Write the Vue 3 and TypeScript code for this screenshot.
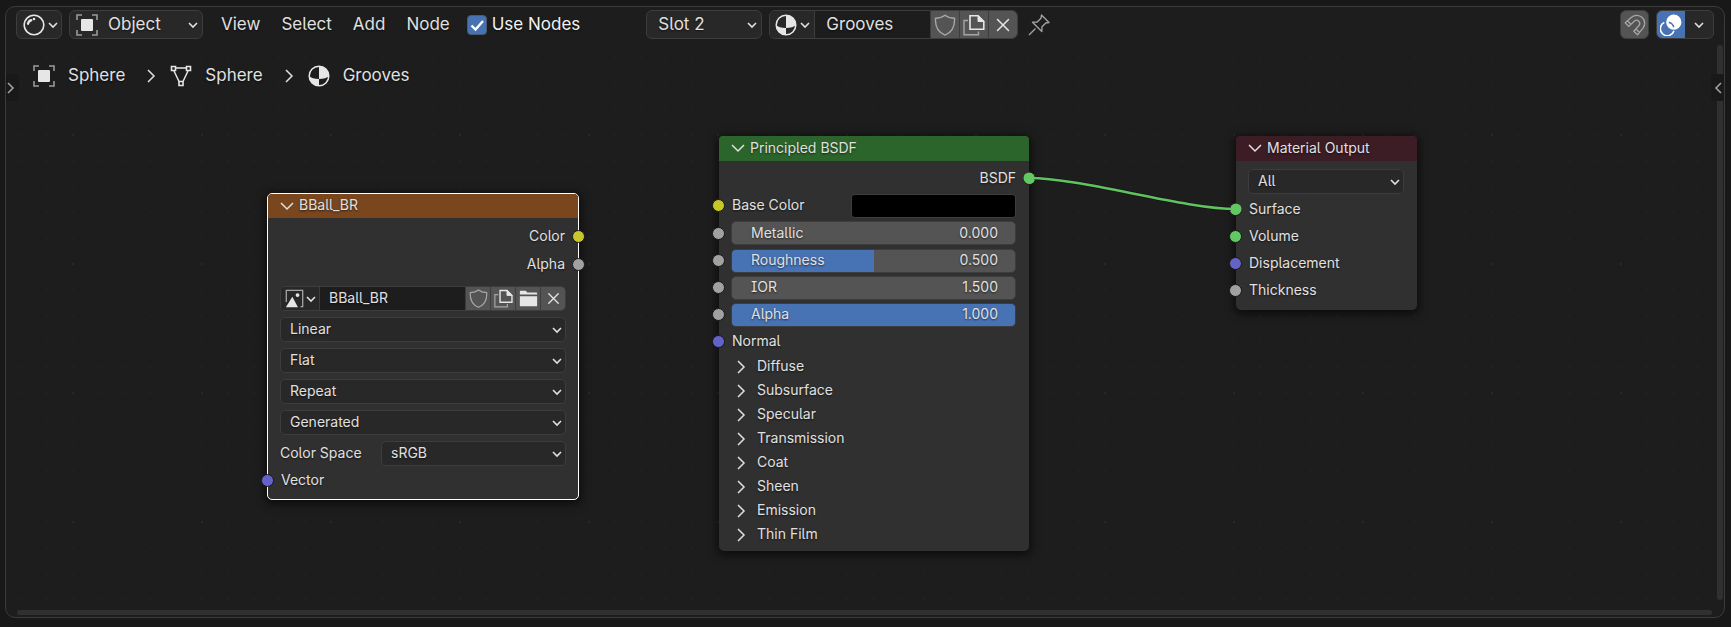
<script setup lang="ts">
import { computed, ref } from 'vue'

interface Slider {
  label: string
  value: number
  fill: number
  tall: boolean
}

const useNodes = ref(true)
const materialName = ref('Grooves')
const imageName = ref('BBall_BR')
const baseColor = ref('#000000')

const menus = ['View', 'Select', 'Add', 'Node']

const crumbs = [
  { icon: 'object', label: 'Sphere' },
  { icon: 'mesh', label: 'Sphere' },
  { icon: 'material', label: 'Grooves' },
]

const imageOptions = [
  { label: 'Interpolation', value: 'Linear' },
  { label: 'Projection', value: 'Flat' },
  { label: 'Extension', value: 'Repeat' },
  { label: 'Source', value: 'Generated' },
]

const sliders = ref<Slider[]>([
  { label: 'Metallic', value: 0, fill: 0, tall: true },
  { label: 'Roughness', value: 0.5, fill: 0.5, tall: false },
  { label: 'IOR', value: 1.5, fill: 0, tall: false },
  { label: 'Alpha', value: 1, fill: 1, tall: false },
])

const panels = ['Diffuse', 'Subsurface', 'Specular', 'Transmission', 'Coat', 'Sheen', 'Emission', 'Thin Film']

const outputSockets = [
  { label: 'Surface', color: 'green' },
  { label: 'Volume', color: 'green' },
  { label: 'Displacement', color: 'blue' },
  { label: 'Thickness', color: 'gray' },
]

const link = { x1: 1023, y1: 171, x2: 1230, y2: 202 }
const linkPath = computed(() => {
  const reach = (link.x2 - link.x1) * 0.25
  return `M${link.x1} ${link.y1}C${link.x1 + reach} ${link.y1} ${link.x2 - reach} ${link.y2} ${link.x2} ${link.y2}`
})
</script>

<template>
  <div class="window">
    <svg class="defs" aria-hidden="true">
      <symbol id="object" viewBox="0 0 22 22">
        <path d="M1 6V1H6M16 1H21V6M21 16V21H16M6 21H1V16" fill="none" stroke="#9a9a9a" stroke-width="1.6" />
        <rect x="5" y="5" width="12" height="12" rx="1" fill="#e6e6e6" />
      </symbol>
      <symbol id="mesh" viewBox="0 0 22 22">
        <path d="M6 3H16M4 6L9 16.500M18 6L13 16.500" fill="none" stroke="#e6e6e6" stroke-width="1.500" />
        <path d="M1.500 1.500H5.500V5.500H1.500ZM16.500 1.500H20.500V5.500H16.500ZM9 16.500H13V20.500H9Z" fill="#1d1d1d" stroke="#e6e6e6" stroke-width="1.600" />
      </symbol>
      <symbol id="material" viewBox="0 0 22 22">
        <circle cx="11" cy="11" r="9.800" fill="none" stroke="#e6e6e6" stroke-width="1.500" />
        <path d="M11 1A10 10 0 0 1 21 11Q18 14 11 14Z" fill="#e6e6e6" />
        <path d="M11 14V21A10 10 0 0 1 1 11Q4 14 11 14Z" fill="#e6e6e6" />
      </symbol>
      <symbol id="editor" viewBox="0 0 22 22">
        <circle cx="11" cy="11" r="9.800" fill="none" stroke="#e6e6e6" stroke-width="1.600" />
        <path d="M5 9.700Q5.800 6.600 8.200 6.200" fill="none" stroke="#e6e6e6" stroke-width="2.400" stroke-linecap="round" />
        <circle cx="11" cy="5" r="1.300" fill="#e6e6e6" />
      </symbol>
      <symbol id="shield" viewBox="0 0 22 22">
        <path d="M11 1.200Q14.500 4 20.500 4.200C21 12 18.500 18 11 21.200C3.500 18 1 12 1.500 4.200Q7.500 4 11 1.200Z" fill="none" stroke="#a6a6a6" stroke-width="1.400" />
      </symbol>
      <symbol id="copy" viewBox="0 0 22 22">
        <path d="M5 6.500H1V20.800H15.500V17.500" fill="none" stroke="#a6a6a6" stroke-width="1.400" />
        <path d="M7 1.700H15L20.800 7.500V15.300H7Z" fill="none" stroke="#e6e6e6" stroke-width="1.600" />
        <path d="M15 1.500V7.500H21Z" fill="#e6e6e6" stroke="#e6e6e6" />
      </symbol>
      <symbol id="close" viewBox="0 0 22 22">
        <path d="M5.500 5.500L16.500 16.500M16.500 5.500L5.500 16.500" fill="none" stroke="#e6e6e6" stroke-width="1.500" stroke-linecap="round" />
      </symbol>
      <symbol id="folder" viewBox="0 0 22 22">
        <path d="M1 6.500V3Q1 2 2 2H8L9.500 4H20Q21 4 21 5V6.500Z" fill="#e6e6e6" />
        <path d="M1 8.500H21V19Q21 20 20 20H2Q1 20 1 19Z" fill="#e6e6e6" />
      </symbol>
      <symbol id="image" viewBox="0 0 22 22">
        <path d="M1.500 15V1.500H20.500V20.500H18" fill="none" stroke="#a6a6a6" stroke-width="1.500" />
        <path d="M1 21L8.500 9L15 21Z" fill="#e6e6e6" />
        <circle cx="14.500" cy="7" r="2.200" fill="#e6e6e6" />
      </symbol>
      <symbol id="pin" viewBox="0 0 22 22">
        <path d="M1 21L7.500 14.500M13.500 1L21 8.500L17.800 9L14 12.800L13.800 17.500L4.500 8.200L9.200 8L13 4.200Z" fill="none" stroke="#a0a0a0" stroke-width="1.400" stroke-linejoin="round" />
      </symbol>
      <symbol id="magnet" viewBox="0 0 22 22">
        <path d="M1.200 8.800L7.500 3.200A8 8 0 0 1 19 14.200L13.500 20.800L9.800 17.200L15 11.500A3.200 3.200 0 0 0 10.500 7L4.800 12.400ZM3.500 6.800L7 10.500M11.800 15L15.500 18.500" fill="none" stroke="#a6a6a6" stroke-width="1.300" stroke-linejoin="round" />
      </symbol>
      <symbol id="overlay" viewBox="0 0 22 22">
        <circle cx="13.800" cy="8.200" r="7.600" fill="#fff" />
        <path d="M4.300 8.400A7 7 0 1 0 14 16.800" fill="none" stroke="#fff" stroke-width="1.600" />
        <path d="M8.800 8.200A7 7 0 0 1 13.800 13.200" fill="none" stroke="#4772b3" stroke-width="1.400" />
      </symbol>
      <symbol id="down" viewBox="0 0 10 10">
        <path d="M1 3L5 7L9 3" fill="none" stroke="#e0e0e0" stroke-width="1.600" />
      </symbol>
      <symbol id="fold" viewBox="0 0 14 14">
        <path d="M1 4L7 10L13 4" fill="none" stroke="#e0e0e0" stroke-width="1.500" />
      </symbol>
      <symbol id="right" viewBox="0 0 14 14">
        <path d="M4 1L10 7L4 13" fill="none" stroke="#e0e0e0" stroke-width="1.500" />
      </symbol>
    </svg>

    <main class="editor">
      <div class="canvas">
        <svg class="backdrop" aria-hidden="true">
          <defs>
            <pattern id="dots" x="66" y="127" width="129" height="129" patternUnits="userSpaceOnUse">
              <template v-for="y in [0, 26, 52, 77, 103]" :key="y">
                <rect v-for="x in [0, 26, 52, 77, 103]" :key="x" :x="x" :y="y" width="2" height="2" :fill="x + y === 0 ? '#282828' : '#212121'" />
              </template>
            </pattern>
          </defs>
          <rect width="100%" height="100%" fill="url(#dots)" />
        </svg>

        <section class="node texture">
          <header class="title orange">
            <svg class="fold"><use href="#fold" /></svg>
            <span>BBall_BR</span>
          </header>
          <div class="outputs">
            <div class="socket-row out tall"><span>Color</span><i class="socket right yellow"></i></div>
            <div class="socket-row out tall"><span>Alpha</span><i class="socket right gray"></i></div>
          </div>
          <div class="id-block compact">
            <button class="cell browse" aria-label="Browse images">
              <svg class="icon"><use href="#image" /></svg>
              <svg class="arrow"><use href="#down" /></svg>
            </button>
            <input v-model="imageName" class="name" aria-label="Image name" spellcheck="false" />
            <button class="cell" aria-label="Fake user"><svg class="icon"><use href="#shield" /></svg></button>
            <button class="cell" aria-label="New image"><svg class="icon"><use href="#copy" /></svg></button>
            <button class="cell" aria-label="Open image"><svg class="icon"><use href="#folder" /></svg></button>
            <button class="cell" aria-label="Unlink"><svg class="icon"><use href="#close" /></svg></button>
          </div>
          <div v-for="option in imageOptions" :key="option.label" class="select">
            <select :aria-label="option.label"><option>{{ option.value }}</option></select>
            <svg class="arrow"><use href="#down" /></svg>
          </div>
          <div class="space-row">
            <label for="space">Color Space</label>
            <div class="select">
              <select id="space"><option>sRGB</option></select>
              <svg class="arrow"><use href="#down" /></svg>
            </div>
          </div>
          <div class="socket-row tall"><i class="socket blue"></i><span>Vector</span></div>
        </section>

        <section class="node shader">
          <header class="title green">
            <svg class="fold"><use href="#fold" /></svg>
            <span>Principled BSDF</span>
          </header>
          <div class="outputs">
            <div class="socket-row out"><span>BSDF</span><i class="socket right green"></i></div>
          </div>
          <div class="socket-row">
            <i class="socket yellow"></i>
            <label for="base">Base Color</label>
            <input id="base" v-model="baseColor" type="color" class="swatch" />
          </div>
          <div v-for="slider in sliders" :key="slider.label" class="slider-row" :class="{ tall: slider.tall }">
            <i class="socket gray"></i>
            <div class="slider">
              <div class="fill" :style="{ width: slider.fill * 100 + '%' }"></div>
              <input :id="slider.label" v-model.number="slider.value" type="range" min="0" max="2" step="0.001" />
              <label :for="slider.label">{{ slider.label }}</label>
              <output :for="slider.label">{{ slider.value.toFixed(3) }}</output>
            </div>
          </div>
          <div class="socket-row"><i class="socket blue"></i><span>Normal</span></div>
          <button v-for="panel in panels" :key="panel" class="panel">
            <svg class="fold"><use href="#right" /></svg><span>{{ panel }}</span>
          </button>
        </section>

        <section class="node output">
          <header class="title red">
            <svg class="fold"><use href="#fold" /></svg>
            <span>Material Output</span>
          </header>
          <div class="select">
            <select aria-label="Target"><option>All</option></select>
            <svg class="arrow"><use href="#down" /></svg>
          </div>
          <div v-for="socket in outputSockets" :key="socket.label" class="socket-row">
            <i class="socket" :class="socket.color"></i><span>{{ socket.label }}</span>
          </div>
        </section>

        <svg class="links" aria-hidden="true">
          <path :d="linkPath" fill="none" stroke="#151515" stroke-width="4" />
          <path :d="linkPath" fill="none" stroke="#5fc45f" stroke-width="2.500" />
          <circle :cx="link.x1" :cy="link.y1" r="5.500" fill="#63c763" />
          <circle :cx="link.x2" :cy="link.y2" r="5.500" fill="#63c763" />
        </svg>
      </div>

      <header class="toolbar">
        <button class="box type" aria-label="Editor type">
          <svg class="icon"><use href="#editor" /></svg>
          <svg class="arrow"><use href="#down" /></svg>
        </button>
        <div class="select mode">
          <svg class="icon"><use href="#object" /></svg>
          <select aria-label="Shader type"><option>Object</option></select>
          <svg class="arrow"><use href="#down" /></svg>
        </div>
        <nav class="menus">
          <button v-for="menu in menus" :key="menu">{{ menu }}</button>
        </nav>
        <label class="check">
          <input v-model="useNodes" type="checkbox" />
          <svg v-if="useNodes" class="tick" viewBox="0 0 20 20"><path d="M4.500 10.500L8.500 14.500L16 6" fill="none" stroke="#fff" stroke-width="2.400" /></svg>
          <span>Use Nodes</span>
        </label>
        <div class="select slot">
          <select aria-label="Slot"><option>Slot 2</option></select>
          <svg class="arrow"><use href="#down" /></svg>
        </div>
        <div class="id-block">
          <button class="cell browse" aria-label="Browse materials">
            <svg class="icon"><use href="#material" /></svg>
            <svg class="arrow"><use href="#down" /></svg>
          </button>
          <input v-model="materialName" class="name" aria-label="Material name" spellcheck="false" />
          <button class="cell" aria-label="Fake user"><svg class="icon"><use href="#shield" /></svg></button>
          <button class="cell" aria-label="New material"><svg class="icon"><use href="#copy" /></svg></button>
          <button class="cell" aria-label="Unlink"><svg class="icon"><use href="#close" /></svg></button>
        </div>
        <button class="pin" aria-label="Pin"><svg class="icon"><use href="#pin" /></svg></button>
        <button class="snap" aria-label="Snap"><svg class="icon"><use href="#magnet" /></svg></button>
        <div class="overlays">
          <button class="active" aria-label="Overlays"><svg class="icon"><use href="#overlay" /></svg></button>
          <button aria-label="Overlay options"><svg class="arrow"><use href="#down" /></svg></button>
        </div>
      </header>

      <nav class="crumbs" aria-label="Context path">
        <template v-for="(crumb, index) in crumbs" :key="index">
          <svg v-if="index" class="fold"><use href="#right" /></svg>
          <span class="crumb"><svg class="icon"><use :href="'#' + crumb.icon" /></svg><span>{{ crumb.label }}</span></span>
        </template>
      </nav>

      <div class="scroll vertical"></div>
      <div class="scroll horizontal"></div>
      <button class="tab left" aria-label="Show toolbar">
        <svg viewBox="0 0 8 12"><path d="M1 1L6 6L1 11" fill="none" stroke="#a0a0a0" stroke-width="1.600" /></svg>
      </button>
      <button class="tab right" aria-label="Show sidebar">
        <svg viewBox="0 0 8 12"><path d="M7 1L2 6L7 11" fill="none" stroke="#a0a0a0" stroke-width="1.600" /></svg>
      </button>
    </main>
  </div>
</template>

<style>
body {
  margin: 0;
  background: #181818;
}
</style>

<style scoped>
* {
  box-sizing: border-box;
}
.window {
  height: 100vh;
  padding: 6px 6px 9px 5px;
  background: #181818;
  color: #e0e0e0;
  font: 17px/20px Inter, "Liberation Sans", sans-serif;
  font-feature-settings: "cv05", "cv08";
  text-shadow: 0 1px 2px rgba(0, 0, 0, 0.6);
  overflow: hidden;
}
.defs {
  position: absolute;
  width: 0;
  height: 0;
}
.editor {
  position: relative;
  height: 100%;
  border: 1px solid #3b3b3b;
  border-radius: 10px;
  background: #1d1d1d;
  overflow: hidden;
}
button,
input,
select {
  margin: 0;
  padding: 0;
  border: 0;
  background: none;
  color: inherit;
  font: inherit;
  font-feature-settings: inherit;
  text-shadow: inherit;
  appearance: none;
  outline: none;
}
svg {
  display: block;
  flex: none;
}
.icon {
  width: 22px;
  height: 22px;
}
.arrow {
  width: 10px;
  height: 10px;
}
.fold {
  width: 14px;
  height: 14px;
}

.toolbar {
  position: relative;
  display: flex;
  align-items: center;
  padding: 3px 10px 0;
}
.box,
.select,
.id-block,
.overlays {
  height: 29px;
  border: 1px solid #3d3d3d;
  border-radius: 6px;
  background: #282828;
}
.type {
  display: flex;
  align-items: center;
  gap: 3px;
  width: 46px;
  padding-left: 6px;
}
.select {
  position: relative;
  display: flex;
  align-items: center;
}
.select select {
  flex: 1;
  align-self: stretch;
  min-width: 0;
  padding: 0 0 2px 11px;
}
.select .arrow {
  position: absolute;
  right: 4px;
  pointer-events: none;
}
.mode {
  width: 134px;
  margin-left: 7px;
  padding-left: 6px;
}
.mode select {
  padding-left: 10px;
}
.menus {
  display: flex;
  gap: 21px;
  margin-left: 18px;
  padding-bottom: 2px;
}
.check {
  position: relative;
  display: flex;
  align-items: center;
  gap: 5px;
  margin-left: 17px;
  color: #f2f2f2;
}
.check span,
.crumb span {
  padding-bottom: 2px;
}
.check input {
  width: 20px;
  height: 20px;
  border: 1px solid #4a5a75;
  border-radius: 4px;
  background: #282828;
}
.check input:checked {
  background: #4772b3;
}
.tick {
  position: absolute;
  left: 0;
  width: 20px;
  height: 20px;
}
.slot {
  width: 116px;
  margin-left: 66px;
}
.id-block {
  display: flex;
  width: 249px;
  margin-left: 7px;
  overflow: hidden;
}
.cell {
  display: flex;
  align-items: center;
  justify-content: center;
  width: 29px;
  border-left: 1px solid #3d3d3d;
  background: #545454;
}
.browse {
  width: 44px;
  gap: 3px;
  border-left: 0;
  background: #282828;
}
.name {
  flex: 1;
  min-width: 0;
  padding: 0 0 2px 11px;
  border-left: 1px solid #3d3d3d;
  background: #1d1d1d;
}
.pin {
  margin-left: 10px;
}
.snap {
  display: grid;
  place-items: center;
  width: 29px;
  height: 29px;
  margin-left: auto;
  border: 1px solid #3d3d3d;
  border-radius: 6px;
  background: #545454;
}
.overlays {
  display: flex;
  width: 58px;
  margin-left: 7px;
  overflow: hidden;
}
.overlays button {
  display: grid;
  place-items: center;
  flex: 1;
}
.overlays .active {
  background: #4772b3;
}

.crumbs {
  position: relative;
  display: flex;
  align-items: center;
  width: max-content;
  padding: 26px 0 0 27px;
}
.crumb {
  display: flex;
  align-items: center;
  gap: 13px;
}
.crumbs > .fold {
  margin: 0 12px 0 19px;
}

.scroll {
  position: absolute;
  border-radius: 3px;
  background: #303030;
}
.vertical {
  top: 38px;
  right: 1px;
  bottom: 17px;
  width: 6px;
}
.horizontal {
  right: 12px;
  bottom: 2px;
  left: 11px;
  height: 5px;
}
.tab {
  position: absolute;
  top: 67px;
  width: 13px;
  height: 27px;
  background: #191919;
}
.tab svg {
  width: 8px;
  height: 12px;
}
.tab.left {
  left: 0;
  border-radius: 0 4px 4px 0;
}
.tab.left svg {
  margin-left: 1px;
}
.tab.right {
  right: 0;
  border-radius: 4px 0 0 4px;
}
.tab.right svg {
  margin-left: 3px;
}

.canvas,
.backdrop,
.links {
  position: absolute;
  inset: 0;
  width: 100%;
  height: 100%;
}
.links {
  pointer-events: none;
}
.node {
  position: absolute;
  display: flex;
  flex-direction: column;
  border-radius: 5px;
  background: #303030;
  box-shadow: 0 2px 10px 2px rgba(0, 0, 0, 0.6);
  font-size: 14px;
}
.node span,
.node label,
.node output,
.node .name {
  padding-bottom: 1px;
}
.texture {
  top: 186px;
  left: 261px;
  width: 312px;
  padding-bottom: 5px;
  border: 1px solid #fff;
}
.shader {
  top: 129px;
  left: 713px;
  width: 310px;
  padding-bottom: 4px;
}
.output {
  top: 129px;
  left: 1230px;
  width: 181px;
  padding-bottom: 6px;
}
.title {
  display: flex;
  align-items: center;
  gap: 5px;
  height: 25px;
  padding: 0 13px 1px 12px;
  border-radius: 4px 4px 0 0;
}
.title.orange {
  height: 24px;
  background: #79461d;
}
.title.green {
  background: #2b652b;
}
.title.red {
  background: #3c1d26;
}
.outputs {
  padding-top: 4px;
}
.socket-row,
.slider-row {
  position: relative;
  display: flex;
  align-items: center;
  height: 27px;
  padding: 0 13px;
}
.slider-row {
  padding-left: 12px;
}
.tall {
  height: 28px;
}
.out {
  justify-content: flex-end;
}
.socket {
  position: absolute;
  left: -7px;
  width: 13px;
  height: 13px;
  border: 1px solid #181818;
  border-radius: 50%;
}
.socket.right {
  right: -7px;
  left: auto;
}
.socket.yellow {
  background: #c7c729;
}
.socket.gray {
  background: #a1a1a1;
}
.socket.green {
  background: #63c763;
}
.socket.blue {
  background: #6363c7;
}
.node .select,
.node .id-block {
  height: 25px;
  border-radius: 5px;
}
.node .select select {
  padding: 0 0 1px 9px;
}
.node .select .arrow {
  right: 3px;
}
.texture > .id-block {
  width: auto;
  margin: 8px 12px 0;
}
.compact .icon {
  width: 19px;
  height: 19px;
}
.compact .cell {
  width: 25px;
}
.compact .browse {
  width: 38px;
  gap: 2px;
}
.compact .name {
  padding-left: 9px;
}
.texture > .select {
  margin: 6px 12px 0;
}
.space-row {
  display: flex;
  align-items: center;
  justify-content: space-between;
  margin: 6px 12px 0;
}
.space-row .select {
  width: 185px;
}
.swatch {
  width: 165px;
  height: 24px;
  margin-left: auto;
  border: 1px solid #3d3d3d;
  border-radius: 4px;
  overflow: hidden;
}
.swatch::-webkit-color-swatch-wrapper {
  padding: 0;
}
.swatch::-webkit-color-swatch {
  border: 0;
}
.slider {
  position: relative;
  display: flex;
  align-items: center;
  justify-content: space-between;
  width: 100%;
  height: 24px;
  padding: 0 17px 0 19px;
  border: 1px solid #3d3d3d;
  border-radius: 5px;
  background: #545454;
  overflow: hidden;
}
.slider .fill,
.slider input {
  position: absolute;
  inset: 0;
  height: 100%;
}
.slider input {
  width: 100%;
  opacity: 0;
}
.slider .fill {
  background: #4772b3;
}
.slider label,
.slider output {
  position: relative;
  pointer-events: none;
}
.panel {
  display: flex;
  align-items: center;
  gap: 9px;
  height: 24px;
  padding-left: 15px;
}
.panel span {
  padding-bottom: 2px;
}
.output > .select {
  margin: 8px 13px 2px 12px;
}
</style>
